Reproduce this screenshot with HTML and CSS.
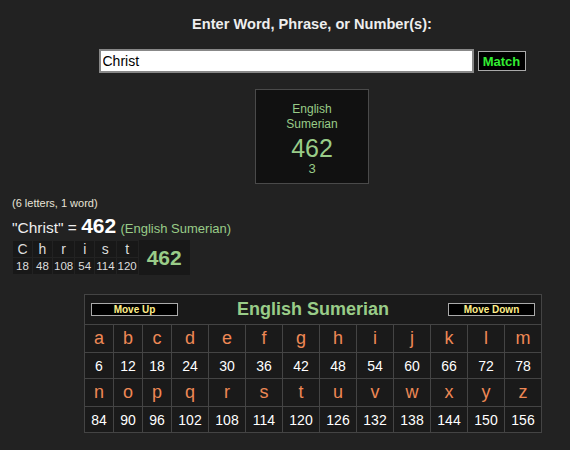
FILE: index.html
```html
<!DOCTYPE html>
<html lang="en">
<head>
<meta charset="UTF-8">
<title>Gematria Calculator</title>
<link rel="stylesheet" href="styles.css">
</head>
<body>

<div class="page">
    <div class="search">
        <h2 class="searchTitle">Enter Word, Phrase, or Number(s):</h2>
        <div class="searchRow">
            <input type="text" class="searchInput" value="Christ">
            <button class="matchBtn">Match</button>
        </div>
        <div class="cipherBox">
            <div class="cipherName">English<br>Sumerian</div>
            <div class="cipherValue">462</div>
            <div class="cipherSub">3</div>
        </div>
    </div>

    <div class="result">
        <div class="counts">(6 letters, 1 word)</div>
        <div class="equation">"Christ" = <b>462</b> <span class="eqCipher">(English Sumerian)</span></div>
        <table class="breakdown">
            <tr class="bdLetters">
                <td>C</td><td>h</td><td>r</td><td>i</td><td>s</td><td>t</td>
                <td class="bdTotal" rowspan="2">462</td>
            </tr>
            <tr class="bdNums">
                <td>18</td><td>48</td><td>108</td><td>54</td><td>114</td><td>120</td>
            </tr>
        </table>
    </div>

    <table class="cipherTable">
        <colgroup>
            <col class="narrow"><col class="narrow"><col class="narrow">
            <col><col><col><col><col><col><col><col><col><col>
        </colgroup>
        <tr>
            <th colspan="13">
                <div class="tableHead">
                    <button class="moveBtn">Move Up</button>
                    <span class="tableTitle">English Sumerian</span>
                    <button class="moveBtn">Move Down</button>
                </div>
            </th>
        </tr>
        <tr class="letterRow">
            <td>a</td><td>b</td><td>c</td><td>d</td><td>e</td><td>f</td><td>g</td><td>h</td><td>i</td><td>j</td><td>k</td><td>l</td><td>m</td>
        </tr>
        <tr class="numRow">
            <td>6</td><td>12</td><td>18</td><td>24</td><td>30</td><td>36</td><td>42</td><td>48</td><td>54</td><td>60</td><td>66</td><td>72</td><td>78</td>
        </tr>
        <tr class="letterRow">
            <td>n</td><td>o</td><td>p</td><td>q</td><td>r</td><td>s</td><td>t</td><td>u</td><td>v</td><td>w</td><td>x</td><td>y</td><td>z</td>
        </tr>
        <tr class="numRow">
            <td>84</td><td>90</td><td>96</td><td>102</td><td>108</td><td>114</td><td>120</td><td>126</td><td>132</td><td>138</td><td>144</td><td>150</td><td>156</td>
        </tr>
    </table>
</div>

</body>
</html>
```

FILE: styles.css
```css
body {
    margin: 0;
    background-color: #222222;
    font-family: "Liberation Sans", Arial, sans-serif;
    color: #eeeeee;
    overflow: hidden;
}

.page {
    width: 624px;
}

.search {
    text-align: center;
}

.searchTitle {
    margin: 0;
    padding-top: 16px;
    font-size: 14.6px;
    line-height: 16px;
    font-weight: bold;
    color: #eeeeee;
}

.searchRow {
    display: flex;
    justify-content: center;
    align-items: center;
    gap: 4px;
    margin-top: 17px;
}

.searchInput {
    box-sizing: border-box;
    width: 375px;
    height: 24px;
    margin: 0;
    padding: 0 2px;
    border: 2px solid #888888;
    background: #ffffff;
    color: #000000;
    font-family: "Liberation Sans", Arial, sans-serif;
    font-size: 14px;
}

.matchBtn {
    box-sizing: border-box;
    width: 48px;
    height: 20px;
    margin: 0;
    padding: 0;
    border: 1px solid #aaaaaa;
    background: #000000;
    color: #33ee33;
    font-family: "Liberation Sans", Arial, sans-serif;
    font-size: 13px;
    font-weight: bold;
}

.cipherBox {
    box-sizing: border-box;
    width: 114px;
    height: 95px;
    margin: 16px auto 0;
    padding-top: 12px;
    border: 1px solid #4a4a4a;
    background: #111111;
    color: #99cc88;
}

.cipherName {
    font-size: 12px;
    line-height: 15px;
}

.cipherValue {
    font-size: 25px;
    line-height: 28px;
    margin-top: 2px;
}

.cipherSub {
    font-size: 13px;
    line-height: 14px;
}

.result {
    padding-left: 12px;
    margin-top: 12px;
}

.counts {
    font-size: 11px;
    line-height: 14px;
    color: #e8e4d8;
}

.equation {
    margin-top: 6px;
    font-size: 15.5px;
    line-height: 20px;
    color: #eeeeee;
}

.equation b {
    font-size: 21px;
    color: #ffffff;
}

.eqCipher {
    font-size: 13px;
    color: #99cc88;
}

.breakdown {
    margin-top: 1px;
    border-collapse: collapse;
    background: #181818;
}

.breakdown td {
    width: 17px;
    padding: 0 1px;
    text-align: center;
    border: 1px solid #222222;
}

.bdLetters td {
    height: 16px;
    font-size: 14px;
    line-height: 16px;
    color: #dddddd;
}

.bdNums td {
    height: 16px;
    font-size: 11.5px;
    line-height: 16px;
    color: #dddddd;
}

.breakdown .bdTotal {
    width: 51px;
    padding: 0;
    font-size: 21px;
    font-weight: bold;
    color: #99cc88;
    border: none;
}

.cipherTable {
    margin: 19px 0 0 84px;
    border-collapse: collapse;
    background: #1a1a1a;
    border: 1px solid #444444;
}

.cipherTable col {
    width: 37px;
}

.cipherTable col.narrow {
    width: 29px;
}

.cipherTable th {
    height: 29px;
    padding: 0 6px;
    border: 1px solid #444444;
}

.tableHead {
    display: flex;
    justify-content: space-between;
    align-items: center;
}

.tableTitle {
    font-size: 18px;
    font-weight: bold;
    color: #99cc88;
}

.moveBtn {
    box-sizing: border-box;
    width: 87px;
    height: 13px;
    margin: 0;
    padding: 0;
    border: 1px solid #aaaaaa;
    background: #000000;
    color: #ffee88;
    font-family: "Liberation Sans", Arial, sans-serif;
    font-size: 10px;
    font-weight: bold;
    line-height: 11px;
}

.cipherTable td {
    padding: 0;
    text-align: center;
    border: 1px solid #444444;
}

.letterRow td {
    height: 27px;
    font-size: 18px;
    color: #ee8855;
}

.numRow td {
    height: 25px;
    font-size: 14px;
    color: #ffffff;
}
```
